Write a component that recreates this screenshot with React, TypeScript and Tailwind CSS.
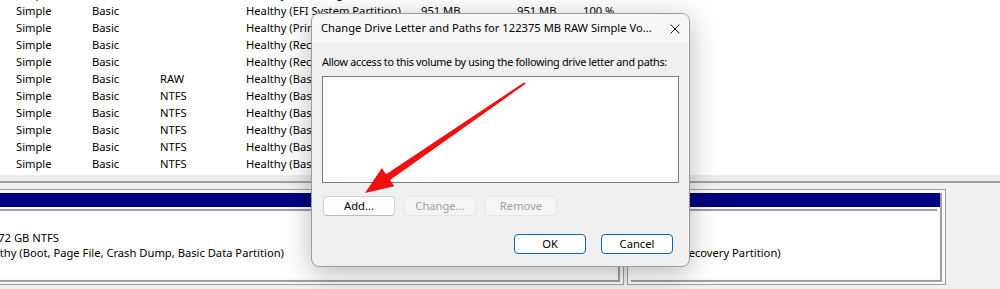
const rows = [
  { fs: "NTFS", status: "Healthy (Boot, Page File, Crash Dump, Basic Data Partition)", cap: "", free: "", pct: "" },
  { fs: "", status: "Healthy (EFI System Partition)", cap: "951 MB", free: "951 MB", pct: "100 %" },
  { fs: "", status: "Healthy (Primary Partition)", cap: "", free: "", pct: "" },
  { fs: "", status: "Healthy (Recovery Partition)", cap: "", free: "", pct: "" },
  { fs: "", status: "Healthy (Recovery Partition)", cap: "", free: "", pct: "" },
  { fs: "RAW", status: "Healthy (Basic Data Partition)", cap: "", free: "", pct: "" },
  { fs: "NTFS", status: "Healthy (Basic Data Partition)", cap: "", free: "", pct: "" },
  { fs: "NTFS", status: "Healthy (Basic Data Partition)", cap: "", free: "", pct: "" },
  { fs: "NTFS", status: "Healthy (Basic Data Partition)", cap: "", free: "", pct: "" },
  { fs: "NTFS", status: "Healthy (Basic Data Partition)", cap: "", free: "", pct: "" },
  { fs: "NTFS", status: "Healthy (Basic Data Partition)", cap: "", free: "", pct: "" },
];

interface PartitionProps {
  className: string;
  name: string;
  size: string;
  status: string;
}

// One partition block from the graphical disk view: navy header strip and a sunken white body.
const Partition = ({ className, name, size, status }: PartitionProps) => (
  <div className={`flex h-[96px] shrink-0 flex-col border border-[#a0a0a0] bg-[#fafafa] px-[3px] pt-[3px] pb-[2px] ${className}`}>
    <div className="flex flex-1 flex-col border-r-2 border-b-2 border-[#a0a0a0]">
      <div className="h-[14px] bg-[#000080]" />
      <div className="mt-[2px] mr-[3px] mb-[2px] flex-1 overflow-hidden border-t-2 border-[#a0a0a0] bg-white pt-[4px] pl-[4px] leading-[15px] whitespace-nowrap">
        <div className="h-[15px] font-bold">{name}</div>
        <div className="h-[15px]">{size}</div>
        <div className="h-[15px]">{status}</div>
      </div>
    </div>
  </div>
);

const App = () => {
  return (
    <div className="relative h-[289px] w-[1000px] overflow-hidden bg-[#f0f0f0] font-['Noto_Sans',sans-serif] text-[11.2px] text-black">
      {/* volume list */}
      <div className="h-[175px] overflow-hidden bg-white">
        <div className="-mt-[14px]">
          {rows.map((row, i) => (
            <div key={i} className="flex h-[17px] items-center whitespace-nowrap pl-[16px]">
              <span className="w-[76px]">Simple</span>
              <span className="w-[68px]">Basic</span>
              <span className="w-[86px]">{row.fs}</span>
              <span className="w-[175px] overflow-hidden">{row.status}</span>
              <span className="w-[96px]">{row.cap}</span>
              <span className="w-[66px]">{row.free}</span>
              <span>{row.pct}</span>
            </div>
          ))}
        </div>
      </div>
      <div className="h-[6px] bg-[#ececec]" />
      <div className="h-[2px] bg-[#a0a0a0]" />

      {/* disk map */}
      <div className="flex gap-[3px] pt-[6px]">
        <Partition className="-ml-[32px] w-[656px]" name="(C:)" size="476.72 GB NTFS" status="Healthy (Boot, Page File, Crash Dump, Basic Data Partition)" />
        <Partition className="w-[319px]" name="" size="990 MB" status="Healthy (Recovery Partition)" />
      </div>

      {/* dialog */}
      <div className="absolute top-[13px] left-[311px] flex h-[254px] w-[379px] flex-col overflow-hidden rounded-[8px] border border-[#9c9c9c] bg-[#f0f0f0] shadow-[0_6px_28px_rgba(0,0,0,0.28)]">
        <div className="flex h-[29px] shrink-0 items-center justify-between bg-[#f7f7f7] pl-[9px] pr-[9px]">
          <span className="whitespace-nowrap">Change Drive Letter and Paths for 122375 MB RAW Simple Vo...</span>
          <svg width="10" height="10" viewBox="0 0 10 10" className="mt-[1px] shrink-0">
            <path d="M0.5 0.5 L9.5 9.5 M9.5 0.5 L0.5 9.5" stroke="#1a1a1a" strokeWidth="1" fill="none" />
          </svg>
        </div>
        <div className="flex flex-1 flex-col px-[10px]">
          <div className="mt-[11px] h-[16px] text-[10.8px] leading-[16px] tracking-[-0.3px] whitespace-nowrap">
            Allow access to this volume by using the following drive letter and paths:
          </div>
          <div className="mt-[6px] h-[107px] border border-[#7a7a7a] bg-white" />
          <div className="mt-[13px] ml-[1px] flex gap-[9px]">
            <button className="h-[20px] w-[72px] rounded-[4px] border border-[#d0d0d0] border-b-[#bdbdbd] bg-[#fdfdfd] leading-none">
              Add...
            </button>
            <button className="h-[20px] w-[72px] rounded-[4px] border border-[#e5e5e5] bg-[#f5f5f5] leading-none text-[#9d9d9d]">
              Change...
            </button>
            <button className="h-[20px] w-[72px] rounded-[4px] border border-[#e5e5e5] bg-[#f5f5f5] leading-none text-[#9d9d9d]">
              Remove
            </button>
          </div>
          <div className="mt-[18px] mr-[6px] flex justify-end gap-[15px]">
            <button className="h-[20px] w-[72px] rounded-[4px] border border-[#0067c0] bg-[#fdfdfd] leading-none">
              OK
            </button>
            <button className="h-[20px] w-[72px] rounded-[4px] border border-[#0067c0] bg-[#fdfdfd] leading-none">
              Cancel
            </button>
          </div>
        </div>
      </div>

      {/* red annotation arrow */}
      <svg className="pointer-events-none absolute top-0 left-0" width="1000" height="289" viewBox="0 0 1000 289">
        <polygon
          points="524.4,82.2 386.1,174.2 381.9,168 365,193 394.3,186.2 390.1,180 525.6,83.8"
          fill="#f01010"
        />
      </svg>
    </div>
  );
};

export default App;
